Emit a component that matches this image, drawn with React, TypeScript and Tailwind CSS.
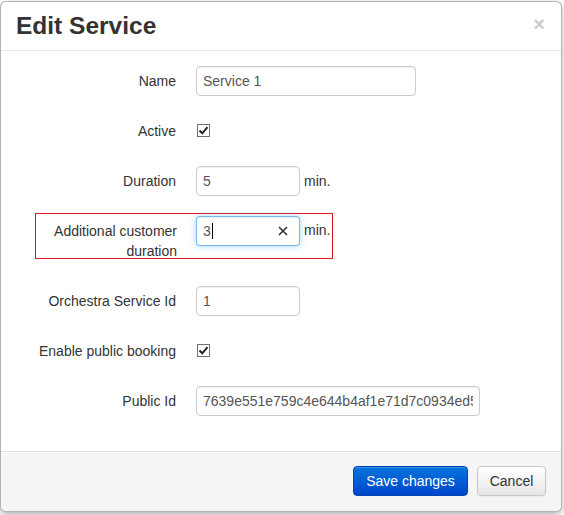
import React from 'react';

function Check() {
  return (
    <span className="inline-flex h-[13px] w-[13px] items-center justify-center border border-[#707070] bg-white">
      <svg width="11" height="11" viewBox="0 0 11 11" fill="none">
        <path d="M1.5 5.5 L4.3 8.3 L9.5 2.2" stroke="#222" strokeWidth="2" />
      </svg>
    </span>
  );
}

const inputCls =
  'h-[30px] rounded-[4px] border border-[#cccccc] bg-white px-[6px] text-[14px] text-[#555] shadow-[inset_0_1px_1px_rgba(0,0,0,0.075)] outline-none';

export default function App() {
  return (
    <div className="min-h-[515px] bg-white pt-[1px]" style={{ fontFamily: '"Liberation Sans", Arial, sans-serif' }}>
      <div className="w-[562px] overflow-hidden rounded-[6px] border border-[rgba(0,0,0,0.3)] bg-white shadow-[0_3px_7px_rgba(0,0,0,0.3)]">
        {/* Header */}
        <div className="flex h-[49px] items-center justify-between border-b border-[#e5e5e5] pl-[15px] pr-[16px]">
          <h3 className="text-[24.5px] font-bold leading-[30px] text-[#333]">Edit Service</h3>
          <span className="mb-[5px] text-[20px] font-bold leading-none text-[#000] opacity-20">×</span>
        </div>

        {/* Body */}
        <div className="pb-[35px] pt-[15px] text-[14px] text-[#333]">
          <div className="flex h-[30px] items-center">
            <div className="w-[175px] text-right">Name</div>
            <input readOnly value="Service 1" className={`${inputCls} ml-[20px] w-[220px]`} />
          </div>

          <div className="mt-[20px] flex h-[30px] items-center">
            <div className="w-[175px] text-right">Active</div>
            <div className="ml-[21px]">
              <Check />
            </div>
          </div>

          <div className="mt-[20px] flex h-[30px] items-center">
            <div className="w-[175px] text-right">Duration</div>
            <input readOnly value="5" className={`${inputCls} ml-[20px] w-[104px]`} />
            <span className="ml-[4px]">min.</span>
          </div>

          <div className="ml-[34px] mt-[17px] flex h-[46px] w-[298px] items-start border border-[#e0151d] pt-[2px]">
            <div className="w-[141px] pt-[5px] text-right leading-[20px]">
              Additional customer duration
            </div>
            <div className="ml-[19px] flex h-[30px] w-[104px] items-center justify-between rounded-[4px] border border-[rgba(82,168,236,0.8)] bg-white px-[6px] text-[14px] text-[#555] shadow-[inset_0_1px_1px_rgba(0,0,0,0.075),0_0_6px_rgba(82,168,236,0.5)]">
              <span className="flex items-center">
                3<span className="ml-[1px] inline-block h-[16px] w-[1px] bg-black" />
              </span>
              <svg width="10" height="10" viewBox="0 0 10 10" className="mr-[5px]">
                <path d="M1 1 L9 9 M9 1 L1 9" stroke="#333" strokeWidth="1.6" />
              </svg>
            </div>
            <span className="ml-[4px] pt-[4px]">min.</span>
          </div>

          <div className="mt-[27px] flex h-[30px] items-center">
            <div className="w-[175px] text-right">Orchestra Service Id</div>
            <input readOnly value="1" className={`${inputCls} ml-[20px] w-[104px]`} />
          </div>

          <div className="mt-[20px] flex h-[30px] items-center">
            <div className="w-[175px] text-right">Enable public booking</div>
            <div className="ml-[21px]">
              <Check />
            </div>
          </div>

          <div className="mt-[20px] flex h-[30px] items-center">
            <div className="w-[175px] text-right">Public Id</div>
            <input
              readOnly
              value="7639e551e759c4e644b4af1e71d7c0934ed5a"
              className={`${inputCls} ml-[20px] w-[284px]`}
            />
          </div>
        </div>

        {/* Footer */}
        <div className="flex h-[60px] items-start justify-end gap-[9px] border-t border-[#dddddd] bg-[#f5f5f5] pr-[15px] pt-[14px] shadow-[inset_0_1px_0_#fff]">
          <button className="h-[30px] w-[115px] rounded-[4px] border border-[#0044b3] bg-gradient-to-b from-[#0a73dc] to-[#0046cc] text-[14px] text-white shadow-[inset_0_1px_0_rgba(255,255,255,0.2)]">
            Save changes
          </button>
          <button className="h-[30px] w-[69px] rounded-[4px] border border-[#c8c8c8] bg-gradient-to-b from-[#ffffff] to-[#e6e6e6] text-[14px] text-[#333] shadow-[0_1px_2px_rgba(0,0,0,0.05)]">
            Cancel
          </button>
        </div>
      </div>
    </div>
  );
}
